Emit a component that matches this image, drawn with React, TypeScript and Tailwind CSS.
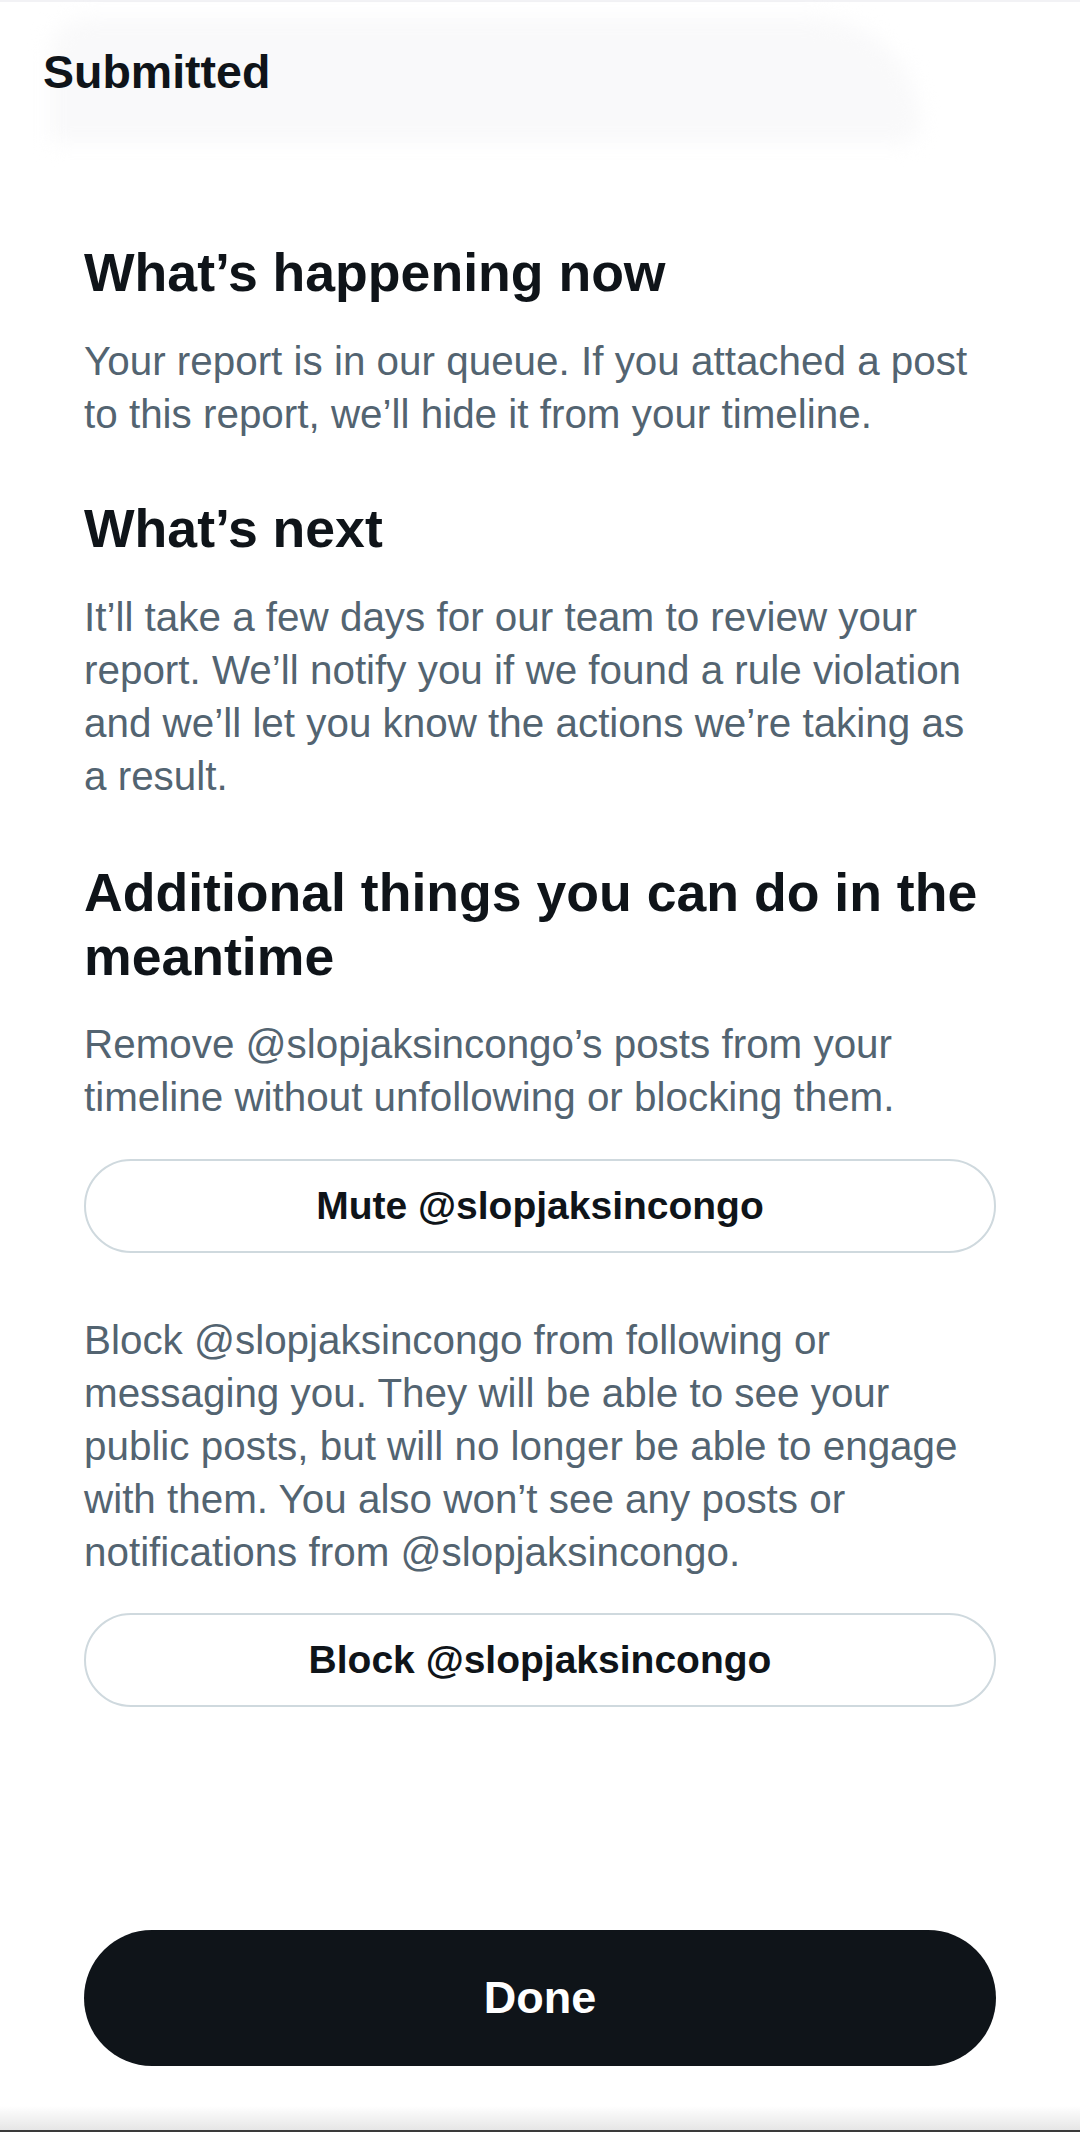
import React from "react";

const handle = "@slopjaksincongo";

function Heading({ lines, className = "" }: { lines: string[]; className?: string }) {
  return (
    <h2 className={`text-[53.6px] leading-[64px] font-bold text-[#0f1419] whitespace-nowrap ${className}`}>
      {lines.map((l, i) => (
        <span key={i} className="block">
          {l}
        </span>
      ))}
    </h2>
  );
}

function Body({ lines, className = "" }: { lines: string[]; className?: string }) {
  return (
    <p className={`text-[40.4px] leading-[53px] text-[#536471] whitespace-nowrap ${className}`}>
      {lines.map((l, i) => (
        <span key={i} className="block">
          {l}
        </span>
      ))}
    </p>
  );
}

function OutlineButton({ label, className = "" }: { label: string; className?: string }) {
  return (
    <button
      className={`w-full h-[94px] rounded-full border-2 border-[#cfd9de] bg-white flex items-center justify-center text-[39px] font-bold text-[#0f1419] ${className}`}
    >
      {label}
    </button>
  );
}

export default function App() {
  return (
    <div className="w-[1080px] h-[2132px] bg-white flex flex-col font-['Liberation_Sans',Arial,sans-serif] overflow-hidden">
      {/* frosted header */}
      <header className="relative h-[143px] shrink-0 border-t-2 border-[#f2f2f5]">
        <div className="absolute left-[50px] top-[16px] w-[870px] h-[125px] bg-[#f9f9fa] rounded-tl-[40px] rounded-tr-[120px] rounded-br-[20px] blur-[10px]" />
        <div className="relative h-full flex items-center pl-[43px] pb-[2px]">
          <h1 className="text-[46.5px] leading-[56px] font-bold text-[#0f1419]">Submitted</h1>
        </div>
      </header>

      <main className="flex-1 flex flex-col px-[84px]">
        <Heading lines={["What’s happening now"]} className="mt-[97px]" />
        <Body
          className="mt-[31px]"
          lines={[
            "Your report is in our queue. If you attached a post",
            "to this report, we’ll hide it from your timeline.",
          ]}
        />

        <Heading lines={["What’s next"]} className="mt-[55px]" />
        <Body
          className="mt-[31px]"
          lines={[
            "It’ll take a few days for our team to review your",
            "report. We’ll notify you if we found a rule violation",
            "and we’ll let you know the actions we’re taking as",
            "a result.",
          ]}
        />

        <Heading
          lines={["Additional things you can do in the", "meantime"]}
          className="mt-[57px]"
        />
        <Body
          className="mt-[30px]"
          lines={[
            `Remove ${handle}’s posts from your`,
            "timeline without unfollowing or blocking them.",
          ]}
        />
        <OutlineButton label={`Mute ${handle}`} className="mt-[35px]" />

        <Body
          className="mt-[61px]"
          lines={[
            `Block ${handle} from following or`,
            "messaging you. They will be able to see your",
            "public posts, but will no longer be able to engage",
            "with them. You also won’t see any posts or",
            `notifications from ${handle}.`,
          ]}
        />
        <OutlineButton label={`Block ${handle}`} className="mt-[34px]" />

        <button className="mt-auto mb-[40px] w-full h-[136px] rounded-full bg-[#0f1419] text-white text-[45px] font-bold flex items-center justify-center">
          Done
        </button>
      </main>

      {/* system nav edge */}
      <div className="h-[24px] shrink-0 bg-gradient-to-b from-white to-[#e6e6e6]" />
      <div className="h-[2px] shrink-0 bg-[#3a3a3a]" />
    </div>
  );
}
